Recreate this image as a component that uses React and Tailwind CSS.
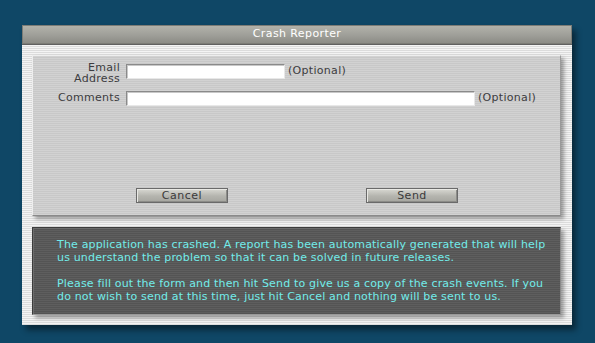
const font = { fontFamily: '"DejaVu Sans", "Liberation Sans", sans-serif' };

function Field({ width }) {
  return (
    <div
      className={`h-[15px] ${width} bg-white border border-t-[#8a8a8a] border-l-[#8a8a8a] border-b-[#e8e8e8] border-r-[#e8e8e8] shadow-[inset_1px_1px_0_#c8c8c8]`}
    />
  );
}

function Button({ children }) {
  return (
    <button className="w-[92px] h-[15px] border border-[#6a6a6a] bg-[linear-gradient(#d8d8d2,#b4b4ae_55%,#a6a6a0)] shadow-[inset_1px_1px_0_#e8e8e4,inset_-1px_-1px_0_#8c8c88] text-[11px] leading-[13px] text-[#3a3a3a] tracking-[0.5px]">
      {children}
    </button>
  );
}

export default function App() {
  return (
    <div className="w-[595px] h-[343px] bg-[#0f4766] pt-[25px] pl-[22px] overflow-hidden" style={font}>
      <div className="w-[550px] h-[300px] flex flex-col bg-[repeating-linear-gradient(#f4f4f4_0px,#f4f4f4_1px,#dcdcdc_1px,#dcdcdc_2px)] shadow-[4px_5px_6px_rgba(0,0,0,0.45)]">
        {/* title bar */}
        <div className="h-[19px] shrink-0 flex items-center justify-center border border-[#7c7c76] bg-[linear-gradient(#b2b2aa,#a0a09a_50%,#8c8c86)] text-white text-[11px] tracking-[0.4px] shadow-[0_1px_0_#606060]">
          Crash Reporter
        </div>

        <div className="flex-1 pl-[10px] pr-[11px] pt-[11px]">
          {/* form panel */}
          <div className="h-[161px] relative border border-t-[#eeeeee] border-l-[#eeeeee] border-b-[#8a8a8a] border-r-[#9a9a9a] bg-[repeating-linear-gradient(#d2d2d2_0px,#d2d2d2_1px,#c8c8c8_1px,#c8c8c8_2px)] shadow-[3px_3px_4px_rgba(0,0,0,0.35)] text-[11px] text-[#3c3c40]">
            <div className="pt-[6px] flex items-center">
              <div className="w-[87px] text-right leading-[11px] tracking-[0.3px]">
                <div>Email</div>
                <div>Address</div>
              </div>
              <div className="ml-[6px] mt-[-3px] flex items-center gap-[3px]">
                <Field width="w-[159px]" />
                <span className="tracking-[0.3px]">(Optional)</span>
              </div>
            </div>
            <div className="mt-[6px] flex items-center">
              <div className="w-[87px] text-right tracking-[0.3px]">Comments</div>
              <div className="ml-[6px] flex items-center gap-[3px]">
                <Field width="w-[349px]" />
                <span className="tracking-[0.3px]">(Optional)</span>
              </div>
            </div>
            <div className="absolute left-[103px] top-[132px] flex gap-[138px]">
              <Button>Cancel</Button>
              <Button>Send</Button>
            </div>
          </div>

          {/* message panel */}
          <div className="mt-[11px] h-[88px] border border-t-[#3c3c3c] border-l-[#3c3c3c] border-b-[#9a9a9a] border-r-[#8a8a8a] bg-[repeating-linear-gradient(#5e5e5e_0px,#5e5e5e_1px,#545454_1px,#545454_2px)] shadow-[3px_3px_4px_rgba(0,0,0,0.35),inset_1px_1px_0_#6c6c6c] pl-[24px] pt-[10px] text-[11px] leading-[13px] text-[#72ecea] tracking-[0.17px] whitespace-nowrap">
            <p>
              The application has crashed. A report has been automatically generated that will help
              <br />
              us understand the problem so that it can be solved in future releases.
            </p>
            <p className="mt-[13px]">
              Please fill out the form and then hit Send to give us a copy of the crash events. If you
              <br />
              do not wish to send at this time, just hit Cancel and nothing will be sent to us.
            </p>
          </div>
        </div>
      </div>
    </div>
  );
}
